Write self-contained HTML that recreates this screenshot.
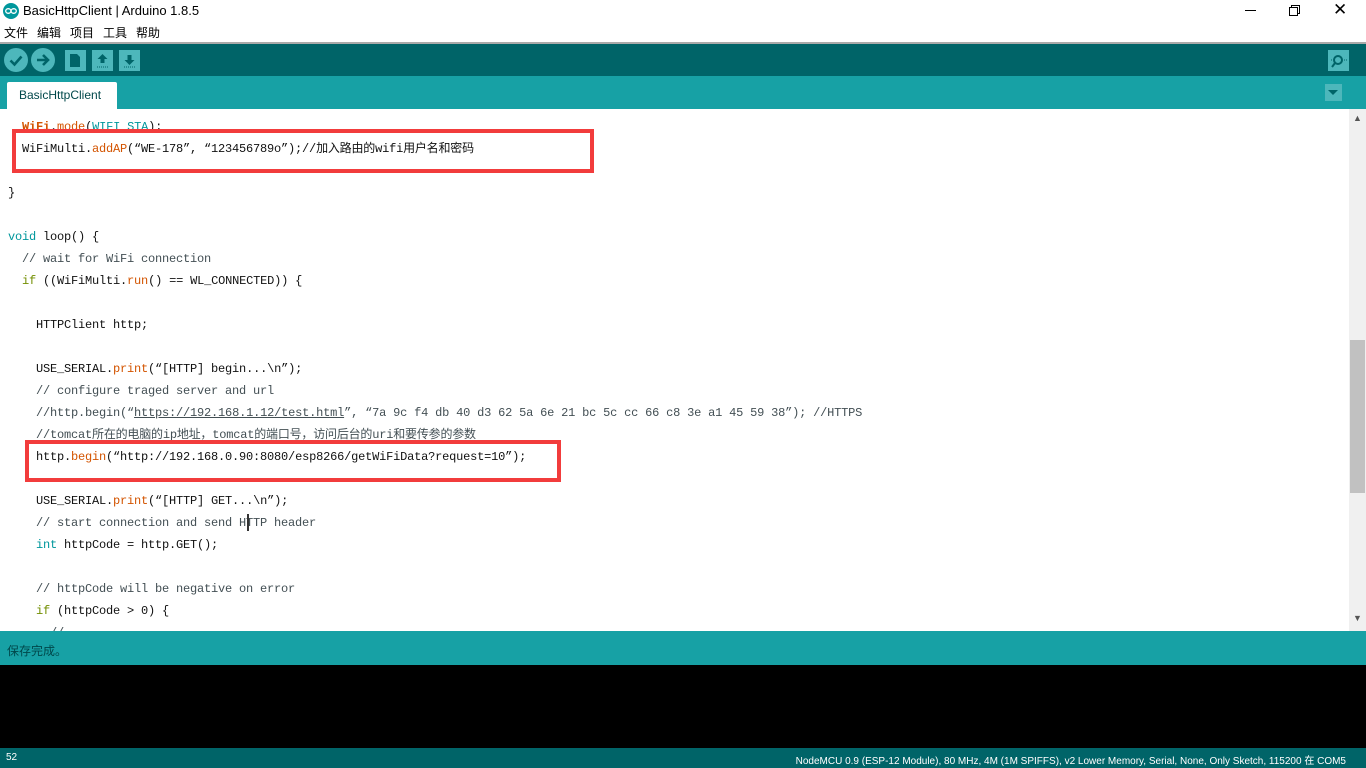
<!DOCTYPE html>
<html><head><meta charset="utf-8"><style>
*{margin:0;padding:0;box-sizing:border-box}
body{width:1366px;height:768px;overflow:hidden;background:#fff;font-family:"Liberation Sans","Noto Sans CJK SC",sans-serif;position:relative}
.abs{position:absolute}
#title{top:0;left:0;width:1366px;height:22px;background:#fff}
#title .t{left:23px;top:3px;font-size:13px;color:#000}
#menu{top:22px;left:0;width:1366px;height:20px;font-size:12px;color:#000}
#sep{top:42px;left:0;width:1366px;height:2px;background:#aaa}
#tool{top:44px;left:0;width:1366px;height:32px;background:#006468}
#tabs{top:76px;left:0;width:1366px;height:33px;background:#17a1a5}
.tab{left:7px;top:6px;width:110px;height:27px;background:#fff;border-radius:2px 2px 0 0;color:#00474a;font-size:12px;padding:6px 0 0 12px}
.btn{background:#4db7bb}
#ed{top:109px;left:0;width:1349px;height:522px;background:#fff;overflow:hidden}
pre{position:absolute;left:8px;top:7px;font-family:"Liberation Mono","Noto Sans CJK SC",monospace;font-size:12px;letter-spacing:-0.2px;line-height:22px;color:#111}
.o{color:#d35400}.k{color:#00979c}.g{color:#434f54}.ol{color:#728e00}.b{color:#d35400;font-weight:bold}
.box{border:4px solid #f23c3c}
#sb{top:109px;left:1349px;width:17px;height:522px;background:#f0f0f0}
#status{top:631px;left:0;width:1366px;height:34px;background:#17a1a5;color:#00474a;font-size:12px;padding:11px 7px}
#con{top:665px;left:0;width:1366px;height:83px;background:#000}
#bot{top:748px;left:0;width:1366px;height:20px;background:#006468;color:#fff;font-size:10px}
</style></head><body>
<div id="title" class="abs">
<svg class="abs" style="left:3px;top:3px" width="16" height="16"><circle cx="8" cy="8" r="8" fill="#00979c"/><ellipse cx="5.3" cy="8" rx="2.6" ry="2.3" fill="none" stroke="#fff" stroke-width="1.3"/><ellipse cx="10.7" cy="8" rx="2.6" ry="2.3" fill="none" stroke="#fff" stroke-width="1.3"/></svg>
<div class="abs t">BasicHttpClient | Arduino 1.8.5</div>
<div class="abs" style="left:1245px;top:10px;width:11px;height:1px;background:#000"></div>
<div class="abs" style="left:1291px;top:5px;width:9px;height:9px;border:1px solid #000;background:#fff"></div>
<div class="abs" style="left:1289px;top:7px;width:9px;height:9px;border:1px solid #000;background:#fff"></div>
<div class="abs" style="left:1333px;top:0px;font-size:17px;color:#000">✕</div>
</div>
<div id="menu" class="abs"><span class="abs" style="left:4px;top:2px">文件</span><span class="abs" style="left:37px;top:2px">编辑</span><span class="abs" style="left:70px;top:2px">项目</span><span class="abs" style="left:103px;top:2px">工具</span><span class="abs" style="left:136px;top:2px">帮助</span></div>
<div id="sep" class="abs"></div>
<div id="tool" class="abs">
<svg class="abs" style="left:4px;top:4px" width="136" height="24">
<circle cx="12" cy="12" r="12" fill="#4db7bb"/><path d="M6.5 12.5l4 4 7-8" stroke="#006468" stroke-width="2.6" fill="none"/>
<circle cx="39" cy="12" r="12" fill="#4db7bb"/><path d="M33 12h10M39 7l5 5-5 5" stroke="#006468" stroke-width="2.6" fill="none"/>
<rect x="61" y="2" width="21" height="21" fill="#4db7bb"/><path d="M66 6h7l3 3v10h-10z" fill="#006468"/>
<rect x="88" y="2" width="21" height="21" fill="#4db7bb"/><path d="M98.5 6l-5 5h3v4h4v-4h3z" fill="#006468"/><path d="M93 19h11" stroke="#006468" stroke-dasharray="1 1"/>
<rect x="115" y="2" width="21" height="21" fill="#4db7bb"/><path d="M125.5 17l-5-5h3v-5h4v5h3z" fill="#006468"/><path d="M120 19h11" stroke="#006468" stroke-dasharray="1 1"/>
</svg>
<svg class="abs" style="left:1328px;top:6px" width="21" height="21"><rect width="21" height="21" fill="#4db7bb"/><circle cx="10" cy="10" r="4" fill="none" stroke="#006468" stroke-width="2"/><path d="M7 13l-3 4" stroke="#006468" stroke-width="2"/><path d="M3 10h1M16 10h3" stroke="#006468" stroke-dasharray="1 1"/></svg>
</div>
<div id="tabs" class="abs"><div class="abs tab">BasicHttpClient</div>
<div class="abs btn" style="left:1325px;top:8px;width:17px;height:17px"><div class="abs" style="left:3px;top:6px;border-left:5px solid transparent;border-right:5px solid transparent;border-top:5px solid #006468"></div></div></div>
<div id="ed" class="abs">
<pre>  <span class="b">WiFi</span>.<span class="o">mode</span>(<span class="k">WIFI_STA</span>);
  WiFiMulti.<span class="o">addAP</span>(“WE-178”, “123456789o”);//加入路由的wifi用户名和密码

}

<span class="k">void</span> loop() {
  <span class="g">// wait for WiFi connection</span>
  <span class="ol">if</span> ((WiFiMulti.<span class="o">run</span>() == WL_CONNECTED)) {

    HTTPClient http;

    USE_SERIAL.<span class="o">print</span>(“[HTTP] begin...\n”);
    <span class="g">// configure traged server and url</span>
    <span class="g">//http.begin(“<u>https://192.168.1.12/test.html</u>”, “7a 9c f4 db 40 d3 62 5a 6e 21 bc 5c cc 66 c8 3e a1 45 59 38”); //HTTPS</span>
    <span class="g">//tomcat所在的电脑的ip地址，tomcat的端口号，访问后台的uri和要传参的参数</span>
    http.<span class="o">begin</span>(“http://192.168.0.90:8080/esp8266/getWiFiData?request=10”);

    USE_SERIAL.<span class="o">print</span>(“[HTTP] GET...\n”);
    <span class="g">// start connection and send HTTP header</span>
    <span class="k">int</span> httpCode = http.GET();

    <span class="g">// httpCode will be negative on error</span>
    <span class="ol">if</span> (httpCode &gt; 0) {
      <span class="g">//</span></pre>
<div class="abs box" style="left:12px;top:20px;width:582px;height:44px"></div>
<div class="abs box" style="left:25px;top:331px;width:536px;height:42px"></div>
<div class="abs" style="left:247px;top:405px;width:2px;height:17px;background:#333"></div>
</div>
<div id="sb" class="abs"><div class="abs" style="left:1px;top:231px;width:15px;height:153px;background:#c1c1c1"></div><div class="abs" style="left:4px;top:4px;color:#555;font-size:9px">▲</div><div class="abs" style="left:4px;top:504px;color:#555;font-size:9px">▼</div></div>
<div id="status" class="abs">保存完成。</div>
<div id="con" class="abs"></div>
<div id="bot" class="abs"><span class="abs" style="left:6px;top:4px">52</span><span class="abs" style="right:20px;top:4px">NodeMCU 0.9 (ESP-12 Module), 80 MHz, 4M (1M SPIFFS), v2 Lower Memory, Serial, None, Only Sketch, 115200 在 COM5</span></div>
</body></html>
